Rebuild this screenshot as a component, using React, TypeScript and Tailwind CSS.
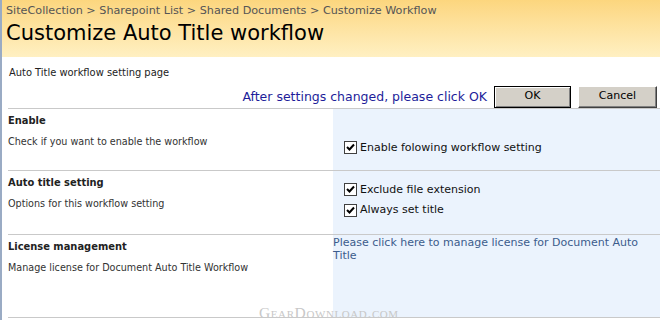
function Check({ label }: { label: string }) {
  return (
    <div className="flex items-center gap-[3px]">
      <span className="flex h-[13px] w-[13px] items-center justify-center border border-[#404040] bg-white">
        <svg width="9" height="9" viewBox="0 0 9 9">
          <path d="M1 4 L3.5 6.5 L8 1.5" fill="none" stroke="#000" strokeWidth="2" />
        </svg>
      </span>
      <span>{label}</span>
    </div>
  );
}

function Section({
  title,
  desc,
  height,
  children,
}: {
  title: string;
  desc: string;
  height: string;
  children: React.ReactNode;
}) {
  return (
    <div className={`flex border-t border-[#c9c9c9] ${height}`}>
      <div
        className="w-[325px] pt-[4px] text-[10.7px] text-[#333]"
        style={{ fontFamily: "'DejaVu Sans Condensed', 'DejaVu Sans', sans-serif" }}
      >
        <div className="text-[11px] font-bold text-[#222]">{title}</div>
        <div className="mt-[5px]">{desc}</div>
      </div>
      <div className="flex-1 bg-[#ebf3fd]">{children}</div>
    </div>
  );
}

export default function App() {
  return (
    <div
      className="relative h-[320px] w-[660px] overflow-hidden border-l-2 border-[#9aabc4] bg-white"
      style={{ fontFamily: "'DejaVu Sans', sans-serif" }}
    >
      <div className="h-[57px] bg-gradient-to-b from-[#fcd67e] to-[#fff0c2] pl-[4px] pt-[3px]">
        <div className="text-[11.2px] text-[#555]">
          SiteCollection &gt; Sharepoint List &gt; Shared Documents &gt; Customize Workflow
        </div>
        <div className="text-[21px] leading-[26px] text-black">Customize Auto Title workflow</div>
      </div>
      <div
        className="pl-[7px] pt-[8px] text-[11px] text-[#222]"
        style={{ fontFamily: "'DejaVu Sans Condensed', 'DejaVu Sans', sans-serif" }}
      >
        Auto Title workflow setting page
      </div>
      <div className="ml-[6px]">
        <div className="flex h-[26px] items-end justify-end pr-[3px]">
          <span className="mr-[7px] mb-[1px] text-[12.5px] text-[#1d1d9a]">After settings changed, please click OK</span>
          <button className="mr-[7px] h-[22px] w-[77px] border border-black bg-[#d4d0c8] text-[11px] text-black shadow-[inset_1px_1px_0_#fff,inset_-1px_-1px_0_#808080]">
            OK
          </button>
          <button className="h-[22px] w-[79px] border border-t-white border-l-white border-b-[#404040] border-r-[#404040] bg-[#d4d0c8] text-[11px] text-black shadow-[inset_-1px_-1px_0_#808080]">
            Cancel
          </button>
        </div>
        <Section title="Enable" desc="Check if you want to enable the workflow" height="h-[62px]">
          <div className="pl-[11px] pt-[31px] text-[11px] text-[#111]">
            <Check label="Enable folowing workflow setting" />
          </div>
        </Section>
        <Section title="Auto title setting" desc="Options for this workflow setting" height="h-[64px]">
          <div className="flex flex-col gap-[4px] pl-[11px] pt-[11px] text-[11px] text-[#111]">
            <Check label="Exclude file extension" />
            <Check label="Always set title" />
          </div>
        </Section>
        <Section title="License management" desc="Manage license for Document Auto Title Workflow" height="h-[83px]">
          <div className="pr-[14px] pt-[1px] text-[11px] leading-[13px] text-[#3c5c8c]">
            Please click here to manage license for Document Auto Title
          </div>
        </Section>
        <div className="border-t border-[#c9c9c9]" />
      </div>
      <div
        className="absolute left-[257px] top-[305px] text-[15.5px] leading-none tracking-[0.6px] text-[#c8c8c8]"
        style={{ fontFamily: "'Liberation Serif', serif", fontVariant: "small-caps" }}
      >
        GearDownload.com
      </div>
    </div>
  );
}
